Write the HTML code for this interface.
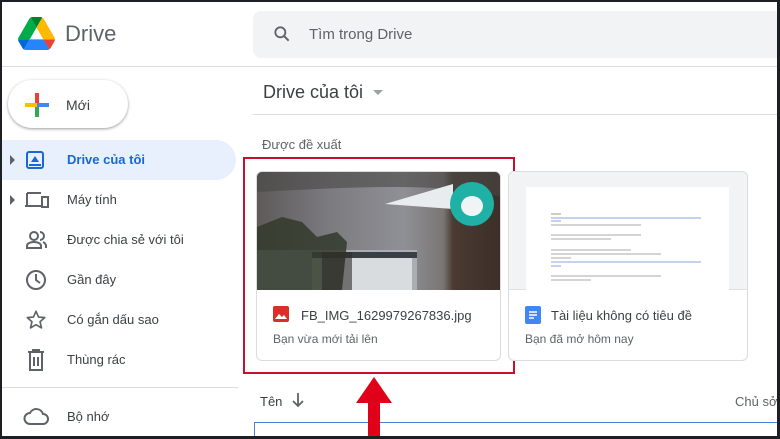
<!DOCTYPE html>
<html><head><meta charset="utf-8"><style>
*{margin:0;padding:0;box-sizing:border-box}
body{width:780px;height:439px;overflow:hidden;background:#1c1f24;font-family:"Liberation Sans",Arial,sans-serif;color:#3c4043}
#page{position:absolute;left:2px;top:2px;width:775px;height:434px;background:#fff;overflow:hidden}
.a{position:absolute;white-space:nowrap}
.nav{position:absolute;left:0;width:234px;height:40px;font-size:13px;color:#3c4043}
.nav span{position:absolute;left:65px;top:12px}
.nav svg{position:absolute;left:20px;top:8px}
</style></head><body><div id="page">
<svg class="a" style="left:16px;top:15px" width="37" height="33" viewBox="0 0 87.3 78"><path d="m6.6 66.85 3.850 6.65c.8 1.4 1.95 2.5 3.3 3.3l13.75-23.8h-27.5c0 1.55.4 3.1 1.2 4.5z" fill="#0066da"/><path d="m43.65 25-13.75-23.8c-1.35.8-2.5 1.9-3.3 3.3l-25.4 44a9.06 9.06 0 0 0-1.2 4.5h27.5z" fill="#00ac47"/><path d="m73.55 76.8c1.35-.8 2.5-1.9 3.3-3.3l1.6-2.75 7.65-13.25c.8-1.4 1.2-2.950 1.2-4.5h-27.502l5.852 11.5z" fill="#ea4335"/><path d="m43.65 25 13.75-23.8c-1.35-.8-2.9-1.2-4.5-1.2h-18.5c-1.6 0-3.15.45-4.5 1.2z" fill="#00832d"/><path d="m59.8 53h-32.3l-13.75 23.8c1.35.8 2.9 1.2 4.5 1.2h50.8c1.6 0 3.15-.45 4.5-1.2z" fill="#2684fc"/><path d="m73.4 26.5-12.7-22c-.8-1.4-1.95-2.5-3.3-3.3l-13.75 23.8 16.15 28h27.45c0-1.55-.4-3.1-1.2-4.5z" fill="#ffba00"/></svg>
<div class="a" style="left:63px;top:19px;font-size:22px;color:#5f6368">Drive</div>
<div class="a" style="left:251px;top:9px;width:530px;height:47px;background:#f1f3f4;border-radius:8px"></div>
<svg class="a" style="left:270px;top:22px" width="20" height="20" viewBox="0 0 24 24"><circle cx="10" cy="10" r="6" fill="none" stroke="#5f6368" stroke-width="2.2"/><path d="M14.5 14.5l5.5 5.5" stroke="#5f6368" stroke-width="2.4"/></svg>
<div class="a" style="left:307px;top:24px;font-size:15px;color:#5f6368">Tìm trong Drive</div>
<div class="a" style="left:0;top:64px;width:775px;height:1px;background:#dadce0"></div>
<div class="a" style="left:6px;top:78px;width:120px;height:48px;border-radius:24px;background:#fff;box-shadow:0 1px 3px rgba(60,64,67,.35),0 1px 2px rgba(60,64,67,.2)"></div>
<svg class="a" style="left:22px;top:90px" width="26" height="26" viewBox="0 0 26 26"><rect x="11" y="1" width="4" height="12" fill="#ea4335"/><rect x="11" y="13" width="4" height="12" fill="#34a853"/><rect x="1" y="11" width="12" height="4" fill="#fbbc04"/><rect x="13" y="11" width="12" height="4" fill="#4285f4"/></svg>
<div class="a" style="left:64px;top:95px;font-size:14px;color:#3c4043">Mới</div>
<div class="nav" style="top:138px;background:#e8f0fe;border-radius:0 20px 20px 0;color:#1967d2;font-weight:bold"><svg style="left:7px;top:15px" width="6" height="10"><path d="M1 0l5 5-5 5z" fill="#5f6368"/></svg><svg style="left:24px;top:11px" width="18" height="18" viewBox="0 0 18 18"><rect x="1" y="1" width="16" height="16" rx="2" fill="none" stroke="#1967d2" stroke-width="2"/><path d="M5 11l4-6 4 6z" fill="#1967d2"/><rect x="3" y="13" width="12" height="2" fill="#1967d2"/></svg><span>Drive của tôi</span></div>
<div class="nav" style="top:178px"><svg style="left:7px;top:15px" width="6" height="10"><path d="M1 0l5 5-5 5z" fill="#5f6368"/></svg><svg style="left:22px;top:11px" width="26" height="18" viewBox="0 0 26 18"><path d="M3 2h14M3 2v12M1 15h16" stroke="#5f6368" stroke-width="2" fill="none"/><rect x="18" y="6" width="6" height="10" fill="none" stroke="#5f6368" stroke-width="2"/></svg><span>Máy tính</span></div>
<div class="nav" style="top:218px"><svg style="left:23px;top:10px" width="24" height="20" viewBox="0 0 24 20"><circle cx="9" cy="6" r="4" fill="none" stroke="#5f6368" stroke-width="2"/><path d="M2 18v-2c0-3 4-4 7-4s7 1 7 4v2z" fill="none" stroke="#5f6368" stroke-width="2"/><path d="M15 2a4 4 0 0 1 0 8M18 12c2 1 3 2 3 4v2" fill="none" stroke="#5f6368" stroke-width="2"/></svg><span>Được chia sẻ với tôi</span></div>
<div class="nav" style="top:258px"><svg style="left:23px;top:9px" width="22" height="22" viewBox="0 0 22 22"><circle cx="11" cy="11" r="9" fill="none" stroke="#5f6368" stroke-width="2"/><path d="M11 5v6l4 3" fill="none" stroke="#5f6368" stroke-width="2"/></svg><span>Gần đây</span></div>
<div class="nav" style="top:298px"><svg style="left:23px;top:9px" width="22" height="22" viewBox="0 0 24 24"><path d="M12 2.5l2.8 6.3 6.7.6-5.1 4.5 1.6 6.7L12 17.1l-6 3.5 1.6-6.7-5.1-4.5 6.7-.6z" fill="none" stroke="#5f6368" stroke-width="1.8" stroke-linejoin="round"/></svg><span>Có gắn dấu sao</span></div>
<div class="nav" style="top:338px"><svg style="left:25px;top:9px" width="18" height="22" viewBox="0 0 18 22"><path d="M1 3h16M6 3V1h6v2M3 4v17h12V4M7 8v9M11 8v9" fill="none" stroke="#5f6368" stroke-width="2"/></svg><span>Thùng rác</span></div>
<div class="a" style="left:0;top:385px;width:236px;height:1px;background:#dadce0"></div>
<div class="nav" style="top:395px"><svg style="left:21px;top:11px" width="26" height="18" viewBox="0 0 26 18"><path d="M7 16h13a5 5 0 0 0 0-10 7 7 0 0 0-13-1 5.5 5.5 0 0 0 0 11z" fill="none" stroke="#5f6368" stroke-width="2"/></svg><span>Bộ nhớ</span></div>
<div class="a" style="left:261px;top:80px;font-size:18px;color:#3c4043">Drive của tôi</div>
<svg class="a" style="left:371px;top:88px" width="10" height="6"><path d="M0 0h10L5 5z" fill="#9aa0a6"/></svg>
<div class="a" style="left:251px;top:112px;width:524px;height:1px;background:#dadce0"></div>
<div class="a" style="left:260px;top:135px;font-size:13px;color:#5f6368">Được đề xuất</div>
<div class="a" style="left:254px;top:169px;width:245px;height:190px;border:1px solid #dadce0;border-radius:6px;overflow:hidden;background:#fff">
 <div class="a" style="left:0;top:0;width:245px;height:118px;background:linear-gradient(90deg,#5d5a58 0%,#7c7b80 30%,#8f9096 60%,#7a7674 76%,#4a3a32 80%,#3c2e28 100%)"></div>
 <svg class="a" style="left:0;top:0" width="245" height="118"><path d="M0 0h245v25C180 10 100 15 0 20z" fill="#4a4846" opacity=".6"/><path d="M128 32l68-20v25z" fill="#e8ecef"/><rect x="0" y="78" width="160" height="40" fill="#a9aeb3"/><rect x="55" y="84" width="100" height="34" fill="#d8dcdf"/><rect x="55" y="80" width="105" height="6" fill="#3a3f45"/><path d="M0 55l25-10 20 5 15 15 20-5 10 10-5 48H0z" fill="#333a2c" opacity=".85"/><path d="M65 80h30v38H65z" fill="#2e2c2a" opacity=".6"/><circle cx="215" cy="32" r="22" fill="#1fb0a6"/><ellipse cx="215" cy="34" rx="11" ry="10" fill="#f0f4f4"/></svg>
 <svg class="a" style="left:16px;top:134px" width="16" height="16"><rect width="16" height="16" rx="2" fill="#d93025"/><path d="M2 13l4-5 3 3 2-2 3 4z" fill="#fff"/></svg>
 <div class="a" style="left:44px;top:136px;font-size:13px;color:#3c4043">FB_IMG_1629979267836.jpg</div>
 <div class="a" style="left:16px;top:160px;font-size:12px;color:#5f6368">Bạn vừa mới tải lên</div>
</div>
<div class="a" style="left:241px;top:155px;width:272px;height:217px;border:2px solid #c8102e"></div>
<div class="a" style="left:506px;top:169px;width:240px;height:190px;border:1px solid #dadce0;border-radius:6px;overflow:hidden;background:#fff">
 <div class="a" style="left:0;top:0;width:240px;height:118px;background:#f1f3f4;border-bottom:1px solid #e0e0e0"></div>
 <div class="a" style="left:17px;top:15px;width:203px;height:103px;background:#fff"><svg width="203" height="103"><g stroke-width="1"><path d="M25 27h10" stroke="#999"/><path d="M25 31h150M25 34h10" stroke="#8aa6e0"/><path d="M25 38h90" stroke="#aaa"/><path d="M25 48h90M25 52h60" stroke="#aaa"/><path d="M25 63h80M25 67h110M25 71h20" stroke="#aaa"/><path d="M25 75h150M25 79h10" stroke="#8aa6e0"/><path d="M25 89h110M25 93h40" stroke="#aaa"/></g></svg></div>
 <svg class="a" style="left:16px;top:134px" width="16" height="18"><rect width="16" height="18" rx="2" fill="#4285f4"/><path d="M4 6h8M4 9h8M4 12h5" stroke="#fff" stroke-width="1.5"/></svg>
 <div class="a" style="left:42px;top:136px;font-size:13px;color:#3c4043">Tài liệu không có tiêu đề</div>
 <div class="a" style="left:16px;top:160px;font-size:12px;color:#5f6368">Bạn đã mở hôm nay</div>
</div>
<div class="a" style="left:258px;top:392px;font-size:13px;color:#3c4043">Tên</div>
<svg class="a" style="left:289px;top:390px" width="14" height="16" viewBox="0 0 14 16"><path d="M7 1v13M2 9l5 5 5-5" fill="none" stroke="#5f6368" stroke-width="1.8"/></svg>
<div class="a" style="left:733px;top:392px;font-size:13px;color:#5f6368">Chủ sở</div>
<div class="a" style="left:252px;top:420px;width:530px;height:20px;border:1px solid #4a7fd6;border-bottom:none"></div>
<svg class="a" style="left:351px;top:375px" width="42" height="60"><path d="M21 0L39 26H27V60H15V26H3z" fill="#e00019"/></svg>
</div></body></html>
